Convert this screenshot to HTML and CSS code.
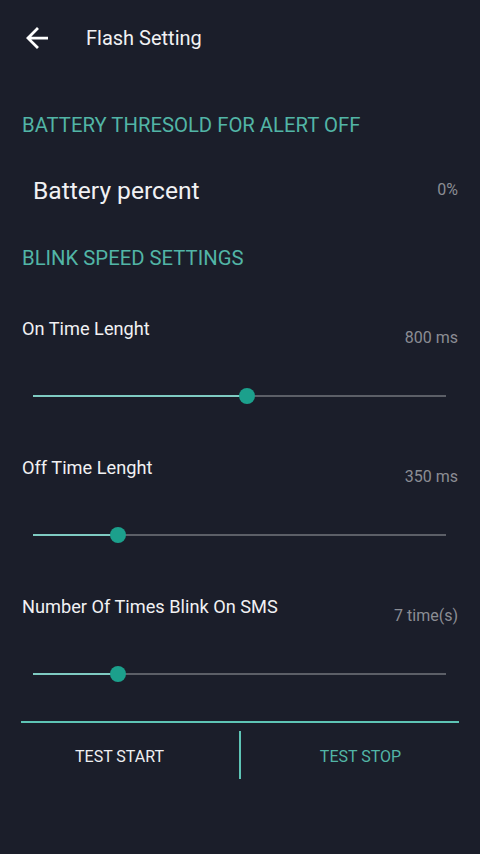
FILE: index.html
```html
<!DOCTYPE html>
<html>
  <head>
    <title>Flash Setting</title>
    <link rel="stylesheet" href="styles.css">
  </head>
  <body>
    <div class="screen">
      <header class="toolbar">
        <svg class="back" viewBox="4 4 16 16" width="22" height="22">
          <path d="M20 11H7.83l5.59-5.59L12 4l-8 8 8 8 1.41-1.41L7.83 13H20v-2z" fill="#fff"/>
        </svg>
        <h1 class="title">Flash Setting</h1>
      </header>

      <!-- Battery -->
      <h2 class="category cat-battery">BATTERY THRESOLD FOR ALERT OFF</h2>
      <div class="battery-row">
        <span class="battery-label">Battery percent</span>
        <span class="value">0%</span>
      </div>

      <!-- Blink speed -->
      <h2 class="category cat-blink">BLINK SPEED SETTINGS</h2>
      <div class="prefs">
        <div class="pref">
          <div class="pref-head">
            <span class="pref-title">On Time Lenght</span>
            <span class="value">800 ms</span>
          </div>
          <div class="slider">
            <div class="track-active" style="width: 51.8%"></div>
            <div class="thumb"></div>
          </div>
        </div>
        <div class="pref">
          <div class="pref-head">
            <span class="pref-title">Off Time Lenght</span>
            <span class="value">350 ms</span>
          </div>
          <div class="slider">
            <div class="track-active" style="width: 20.6%"></div>
            <div class="thumb"></div>
          </div>
        </div>
        <div class="pref">
          <div class="pref-head">
            <span class="pref-title">Number Of Times Blink On SMS</span>
            <span class="value">7 time(s)</span>
          </div>
          <div class="slider">
            <div class="track-active" style="width: 20.6%"></div>
            <div class="thumb"></div>
          </div>
        </div>
      </div>

      <div class="line"></div>
      <div class="buttons">
        <button class="btn btn-start">TEST START</button>
        <div class="divider"></div>
        <button class="btn btn-stop">TEST STOP</button>
      </div>
    </div>
  </body>
</html>
```

FILE: styles.css
```css
html,
body {
  height: 100%;
  margin: 0;
}
body {
  background-color: #1b1e2a;
  font-family: Roboto, 'Noto Sans', sans-serif;
  color: #f1f1f3;
}

.screen {
  display: flex;
  flex-direction: column;
  padding: 0 22px 0 22px;
}

.toolbar {
  height: 76px;
  display: flex;
  align-items: center;
}

.back {
  margin-left: 4px;
}

.title {
  margin: 0 0 0 38px;
  font-size: 20px;
  font-weight: normal;
}

.category {
  margin: 0;
  font-size: 20.3px;
  font-weight: normal;
  line-height: 24px;
  color: #52b5a6;
}

.cat-battery {
  margin-top: 37px;
}

.battery-row {
  margin-top: 33px;
  height: 40px;
  display: flex;
  justify-content: space-between;
  align-items: center;
}

.battery-label {
  margin-left: 11px;
  font-size: 24.6px;
}

.cat-blink {
  margin-top: 36px;
}

.prefs {
  margin-top: 48px;
  display: flex;
  flex-direction: column;
  gap: 51px;
}

.pref-head {
  display: flex;
  justify-content: space-between;
  align-items: flex-start;
  height: 22px;
}

.pref-title {
  font-size: 18.2px;
  line-height: 22px;
}

.value {
  font-size: 16px;
  line-height: 22px;
  color: #8b8d94;
}

.pref-head .value {
  margin-top: 9px;
}

.slider {
  position: relative;
  margin: 46px 12px 0 11px;
  height: 20px;
  display: flex;
  align-items: center;
}

.slider::before {
  content: '';
  position: absolute;
  left: 0;
  right: 0;
  top: 9px;
  height: 2px;
  background-color: #5c5f67;
}

.track-active {
  position: relative;
  height: 2px;
  background-color: #7fcbc2;
}

.thumb {
  position: relative;
  width: 16px;
  height: 16px;
  margin-left: -8px;
  border-radius: 50%;
  background-color: #1ca08c;
}

.line {
  margin: 37px -1px 0 -1px;
  height: 2px;
  background-color: #5ec4b5;
}

.buttons {
  margin: 0 -22px;
  display: flex;
  align-items: flex-start;
  height: 70px;
}

.btn {
  flex: 1;
  height: 66px;
  background: none;
  border: none;
  font-family: Roboto, 'Noto Sans', sans-serif;
  font-size: 16px;
  padding: 0;
}

.btn-start {
  color: #eeeef1;
}

.btn-stop {
  color: #52b5a6;
}

.divider {
  width: 2px;
  height: 48px;
  margin-top: 8px;
  background-color: #5ec4b5;
}
```
